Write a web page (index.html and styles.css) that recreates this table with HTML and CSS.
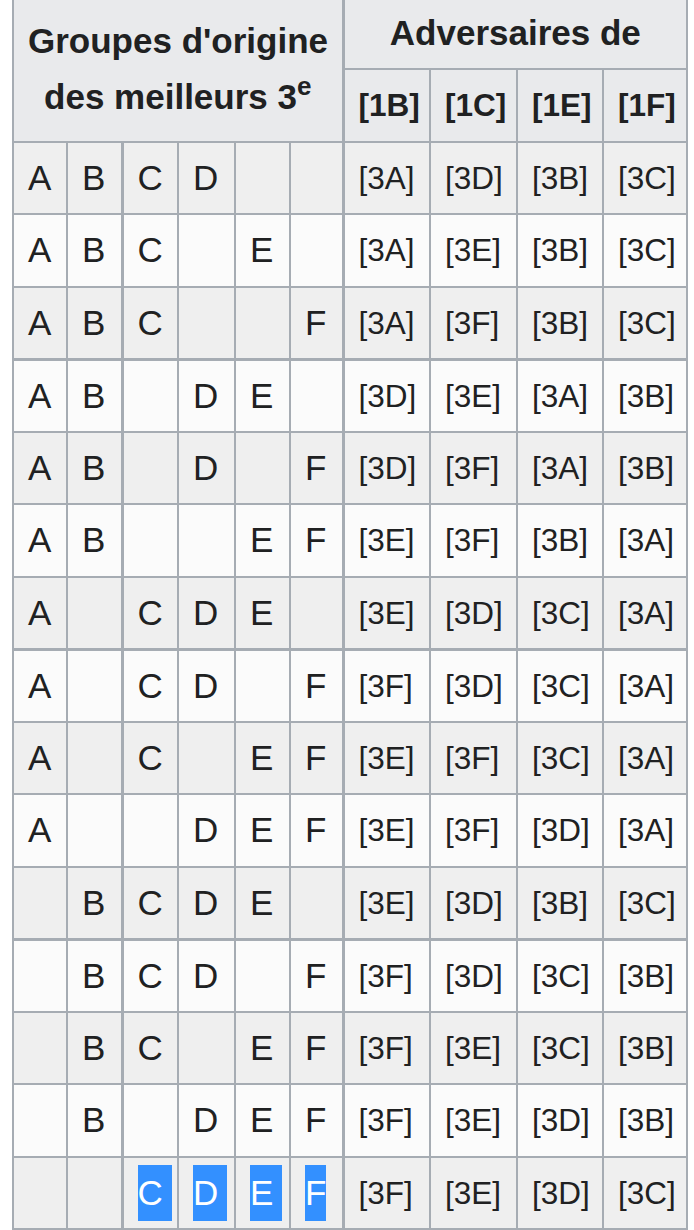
FILE: index.html
```html
<!DOCTYPE html>
<html lang="fr">
<head>
<meta charset="utf-8">
<title>Meilleurs 3e</title>
<link rel="stylesheet" href="styles.css">
</head>
<body>
<table class="wt">
  <colgroup>
    <col class="w1"><col class="w2"><col class="w3"><col class="w4"><col class="w5"><col class="w6">
    <col class="w7"><col class="w8"><col class="w9"><col class="w10">
  </colgroup>
  <thead>
    <tr class="h1">
      <th colspan="6" rowspan="2" class="grp">Groupes d'origine<br>des meilleurs 3<sup>e</sup></th>
      <th colspan="4" class="vs">Adversaires de</th>
    </tr>
    <tr class="h2">
      <th class="b vs">[1B]</th><th class="b">[1C]</th><th class="b">[1E]</th><th class="b">[1F]</th>
    </tr>
  </thead>
  <tbody>
    <tr class="odd"><td>A</td><td>B</td><td class="k">C</td><td>D</td><td></td><td></td><td class="r vs">[3A]</td><td class="r">[3D]</td><td class="r">[3B]</td><td class="r">[3C]</td></tr>
    <tr><td>A</td><td>B</td><td class="k">C</td><td></td><td>E</td><td></td><td class="r vs">[3A]</td><td class="r">[3E]</td><td class="r">[3B]</td><td class="r">[3C]</td></tr>
    <tr class="odd sep"><td>A</td><td>B</td><td class="k">C</td><td></td><td></td><td>F</td><td class="r vs">[3A]</td><td class="r">[3F]</td><td class="r">[3B]</td><td class="r">[3C]</td></tr>
    <tr><td>A</td><td>B</td><td class="k"></td><td>D</td><td>E</td><td></td><td class="r vs">[3D]</td><td class="r">[3E]</td><td class="r">[3A]</td><td class="r">[3B]</td></tr>
    <tr class="odd"><td>A</td><td>B</td><td class="k"></td><td>D</td><td></td><td>F</td><td class="r vs">[3D]</td><td class="r">[3F]</td><td class="r">[3A]</td><td class="r">[3B]</td></tr>
    <tr><td>A</td><td>B</td><td class="k"></td><td></td><td>E</td><td>F</td><td class="r vs">[3E]</td><td class="r">[3F]</td><td class="r">[3B]</td><td class="r">[3A]</td></tr>
    <tr class="odd sep"><td>A</td><td></td><td class="k">C</td><td>D</td><td>E</td><td></td><td class="r vs">[3E]</td><td class="r">[3D]</td><td class="r">[3C]</td><td class="r">[3A]</td></tr>
    <tr><td>A</td><td></td><td class="k">C</td><td>D</td><td></td><td>F</td><td class="r vs">[3F]</td><td class="r">[3D]</td><td class="r">[3C]</td><td class="r">[3A]</td></tr>
    <tr class="odd"><td>A</td><td></td><td class="k">C</td><td></td><td>E</td><td>F</td><td class="r vs">[3E]</td><td class="r">[3F]</td><td class="r">[3C]</td><td class="r">[3A]</td></tr>
    <tr><td>A</td><td></td><td class="k"></td><td>D</td><td>E</td><td>F</td><td class="r vs">[3E]</td><td class="r">[3F]</td><td class="r">[3D]</td><td class="r">[3A]</td></tr>
    <tr class="odd sep"><td></td><td>B</td><td class="k">C</td><td>D</td><td>E</td><td></td><td class="r vs">[3E]</td><td class="r">[3D]</td><td class="r">[3B]</td><td class="r">[3C]</td></tr>
    <tr><td></td><td>B</td><td class="k">C</td><td>D</td><td></td><td>F</td><td class="r vs">[3F]</td><td class="r">[3D]</td><td class="r">[3C]</td><td class="r">[3B]</td></tr>
    <tr class="odd"><td></td><td>B</td><td class="k">C</td><td></td><td>E</td><td>F</td><td class="r vs">[3F]</td><td class="r">[3E]</td><td class="r">[3C]</td><td class="r">[3B]</td></tr>
    <tr><td></td><td>B</td><td class="k"></td><td>D</td><td>E</td><td>F</td><td class="r vs">[3F]</td><td class="r">[3E]</td><td class="r">[3D]</td><td class="r">[3B]</td></tr>
    <tr class="odd last"><td></td><td></td><td class="k"><span class="sel pad">C</span></td><td><span class="sel pad">D</span></td><td><span class="sel pad">E</span></td><td><span class="sel">F</span></td><td class="r vs">[3F]</td><td class="r">[3E]</td><td class="r">[3D]</td><td class="r">[3C]</td></tr>
  </tbody>
</table>
</body>
</html>
```

FILE: styles.css
```css
html, body {
  margin: 0;
  padding: 0;
  background: #ffffff;
}

.wt {
  margin: -4px 0 0 12px;
  border-collapse: collapse;
  table-layout: fixed;
  width: 676px;
  font-family: "Liberation Sans", Arial, sans-serif;
  color: #202122;
  background: #f8f9fa;
}

.w1 { width: 54px; }
.w2 { width: 55px; }
.w3 { width: 56px; }
.w4 { width: 57px; }
.w5 { width: 55px; }
.w6 { width: 53px; }
.w7 { width: 87px; }
.w8 { width: 87px; }
.w9 { width: 86px; }
.w10 { width: 84px; }

.wt th,
.wt td {
  border: 2px solid #a6acb3;
  padding: 7px 14px;
  line-height: 56px;
  font-size: 35px;
  vertical-align: middle;
  white-space: nowrap;
  overflow: hidden;
}

.wt th {
  background: #e9eaec;
  font-weight: bold;
  text-align: center;
}

.wt td {
  text-align: left;
}

.wt tr {
  height: 72.5px;
}

.wt tr.h1 {
  height: 72px;
}

.grp sup {
  font-size: 26px;
  line-height: 0;
  vertical-align: 14px;
}

.wt th.b {
  font-size: 31.5px;
}

.wt td.r {
  font-size: 31.5px;
}

.wt .k,
.wt .vs {
  border-left-width: 3px;
}

.wt tbody tr { background: #fbfbfb; }
.wt tbody tr.odd { background: #efefef; }

.wt tr.sep td {
  border-bottom-width: 3px;
}

.wt tr.last td {
  border-bottom-width: 3px;
}

.sel {
  display: inline-block;
  line-height: 56px;
  background: #3390ff;
  color: #ffffff;
}

.sel.pad {
  padding-right: 9px;
}
```
